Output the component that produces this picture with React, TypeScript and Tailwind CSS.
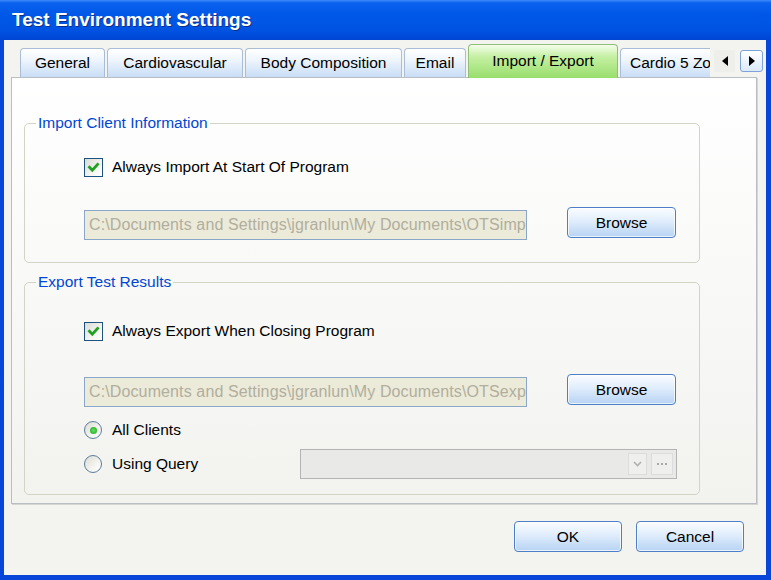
import type { ReactNode } from "react";

/* ================= SMALL PARTS ================= */

const FONT = "font-['Liberation_Sans',Arial,sans-serif]";

function Tab({
  label,
  width,
  selected = false,
}: {
  label: string;
  width: string;
  selected?: boolean;
}) {
  if (selected) {
    return (
      <div
        className={`${width} relative z-10 -mb-px flex h-[34px] items-center justify-center rounded-t-[4px] border border-b-0 border-[#8fbf78] bg-[linear-gradient(180deg,#f4fdec_0%,#c6f0a3_35%,#98de6c_100%)] pb-[2px] text-[15.5px] text-black`}
      >
        {label}
      </div>
    );
  }
  return (
    <div
      className={`${width} flex h-[29px] shrink-0 items-center justify-center rounded-t-[4px] border border-b-0 border-[#a9bdd6] bg-[linear-gradient(180deg,#ffffff_0%,#eef5fd_40%,#c8ddf5_100%)] text-[15.5px] text-black`}
    >
      {label}
    </div>
  );
}

function CheckBox() {
  return (
    <div className="flex h-[19px] w-[19px] items-center justify-center border border-[#1c5180] bg-[linear-gradient(135deg,#dcdcd5_0%,#f4f4f0_60%,#ffffff_100%)]">
      <svg width="13" height="13" viewBox="0 0 13 13">
        <polyline
          points="2.5,6.3 5.3,9.2 10.6,3.4"
          fill="none"
          stroke="#21a121"
          strokeWidth="2.8"
          strokeLinecap="square"
        />
      </svg>
    </div>
  );
}

function Radio({ checked = false }: { checked?: boolean }) {
  return (
    <div className="flex h-[18px] w-[18px] items-center justify-center rounded-full border border-[#5b7c9b] bg-[linear-gradient(135deg,#dcdcd5_0%,#f4f4f0_60%,#ffffff_100%)]">
      {checked && (
        <div className="h-[7px] w-[7px] rounded-full bg-[radial-gradient(circle,#5fe05f_0%,#21a121_100%)]" />
      )}
    </div>
  );
}

function XpButton({ children, width }: { children: ReactNode; width: string }) {
  return (
    <button
      type="button"
      className={`${width} h-[31px] shrink-0 rounded-[4px] border border-[#4e7fc6] bg-[linear-gradient(180deg,#fbfdff_0%,#e0edfc_45%,#b7d3f3_100%)] text-[15.5px] text-black shadow-[inset_0_0_0_1px_rgba(255,255,255,0.7)]`}
    >
      {children}
    </button>
  );
}

function PathBox({ value }: { value: string }) {
  return (
    <div className="mt-[3px] h-[30px] w-[443px] overflow-hidden whitespace-nowrap border border-[#8aa6c8] bg-[#ecead9] pl-[4px] text-[16px] leading-[28px] tracking-[0.12px] text-[#b1ae9e]">
      {value}
    </div>
  );
}

function GroupBox({
  title,
  className,
  children,
}: {
  title: string;
  className: string;
  children: ReactNode;
}) {
  return (
    <fieldset
      className={`${className} ml-[12px] w-[676px] rounded-[5px] border border-[#d3d3c6]`}
    >
      <legend className="ml-[11px] px-[2px] text-[15.5px] leading-[18px] text-[#0046d5]">
        {title}
      </legend>
      <div className="pl-[59px]">{children}</div>
    </fieldset>
  );
}

/* ================= APP ================= */

export default function App() {
  return (
    <div
      className={`${FONT} flex h-[580px] w-[771px] flex-col overflow-hidden bg-[#0746d8]`}
    >
      {/* TITLE BAR */}
      <div className="flex h-[40px] shrink-0 items-center bg-[linear-gradient(180deg,#3d8bf8_0%,#0c62ee_7%,#0058e8_35%,#0053e2_75%,#0045d3_100%)] pl-[12px] pt-[1px]">
        <span className="text-[19px] font-bold text-white [text-shadow:1px_1px_0_#0a2e8a]">
          Test Environment Settings
        </span>
      </div>

      {/* BODY */}
      <div className="mb-[5px] ml-[4px] mr-[5px] flex flex-1 flex-col bg-[#f3f3ef]">
        {/* TABS */}
        <div className="flex h-[37px] shrink-0 items-end gap-[2px] pl-[16px]">
          <Tab label="General" width="w-[85px]" />
          <Tab label="Cardiovascular" width="w-[136px]" />
          <Tab label="Body Composition" width="w-[157px]" />
          <Tab label="Email" width="w-[62px]" />
          <Tab label="Import / Export" width="w-[150px]" selected />
          <div className="w-[90px] shrink-0 overflow-hidden">
            <div className="flex h-[29px] w-[130px] items-center rounded-t-[4px] border border-b-0 border-[#a9bdd6] bg-[linear-gradient(180deg,#ffffff_0%,#eef5fd_40%,#c8ddf5_100%)] pl-[9px] text-[15.5px] text-black">
              Cardio 5 Zo
            </div>
          </div>
          {/* TAB SCROLL ARROWS */}
          <div className="mb-[5px] ml-[2px] flex h-[22px] w-[21px] shrink-0 items-center justify-center rounded-[2px] bg-[#eeeeea]">
            <svg width="8" height="10" viewBox="0 0 8 10">
              <polygon points="7,0 7,10 1,5" fill="#000" />
            </svg>
          </div>
          <div className="mb-[5px] ml-[3px] flex h-[22px] w-[23px] shrink-0 items-center justify-center rounded-[3px] border border-[#7fa2d8] bg-[linear-gradient(180deg,#ffffff_0%,#dbe9fb_100%)]">
            <svg width="8" height="10" viewBox="0 0 8 10">
              <polygon points="1,0 1,10 7,5" fill="#000" />
            </svg>
          </div>
        </div>

        {/* TAB PANEL */}
        <div className="ml-[7px] h-[427px] w-[746px] shrink-0 border border-[#b9bec4] bg-[linear-gradient(180deg,#ffffff_0%,#fbfbfa_30%,#f2f2ef_100%)] pt-[36px] shadow-[1px_1px_0_#d6d6d0]">
          <GroupBox title="Import Client Information" className="pb-[22px]">
            <div className="mt-[25px] flex h-[20px] items-center">
              <CheckBox />
              <span className="ml-[9px] text-[15.5px] text-black">
                Always Import At Start Of Program
              </span>
            </div>
            <div className="mt-[30px] flex items-start">
              <PathBox value="C:\Documents and Settings\jgranlun\My Documents\OTSimport" />
              <div className="ml-[40px]">
                <XpButton width="w-[109px]">Browse</XpButton>
              </div>
            </div>
          </GroupBox>

          <GroupBox title="Export Test Results" className="mt-[10px] pb-[15px]">
            <div className="mt-[30px] flex h-[20px] items-center">
              <CheckBox />
              <span className="ml-[9px] text-[15.5px] text-black">
                Always Export When Closing Program
              </span>
            </div>
            <div className="mt-[33px] flex items-start">
              <PathBox value="C:\Documents and Settings\jgranlun\My Documents\OTSexport" />
              <div className="ml-[40px]">
                <XpButton width="w-[109px]">Browse</XpButton>
              </div>
            </div>
            <div className="mt-[13px] flex h-[20px] items-center">
              <Radio checked />
              <span className="ml-[10px] text-[15.5px] text-black">All Clients</span>
            </div>
            <div className="mt-[9px] flex h-[30px] items-center">
              <Radio />
              <span className="ml-[10px] w-[188px] text-[15.5px] text-black">
                Using Query
              </span>
              {/* QUERY DROPDOWN (disabled) */}
              <div className="flex h-[30px] w-[377px] items-center justify-end gap-[4px] border border-[#b4b4b4] bg-[#e9e9e7] pr-[3px]">
                <div className="flex h-[22px] w-[19px] items-center justify-center border border-[#dcdcdc] bg-[#efefed]">
                  <svg width="9" height="6" viewBox="0 0 9 6">
                    <polyline
                      points="1,1 4.5,4.5 8,1"
                      fill="none"
                      stroke="#b0b0b0"
                      strokeWidth="1.6"
                    />
                  </svg>
                </div>
                <div className="flex h-[22px] w-[22px] items-center justify-center gap-[2px] border border-[#dcdcdc] bg-[#efefed]">
                  <span className="h-[2px] w-[2px] bg-[#a8a8a8]" />
                  <span className="h-[2px] w-[2px] bg-[#a8a8a8]" />
                  <span className="h-[2px] w-[2px] bg-[#a8a8a8]" />
                </div>
              </div>
            </div>
          </GroupBox>
        </div>

        {/* ACTIONS */}
        <div className="mt-[17px] flex justify-end gap-[14px] pr-[22px]">
          <XpButton width="w-[108px]">OK</XpButton>
          <XpButton width="w-[108px]">Cancel</XpButton>
        </div>
      </div>
    </div>
  );
}
